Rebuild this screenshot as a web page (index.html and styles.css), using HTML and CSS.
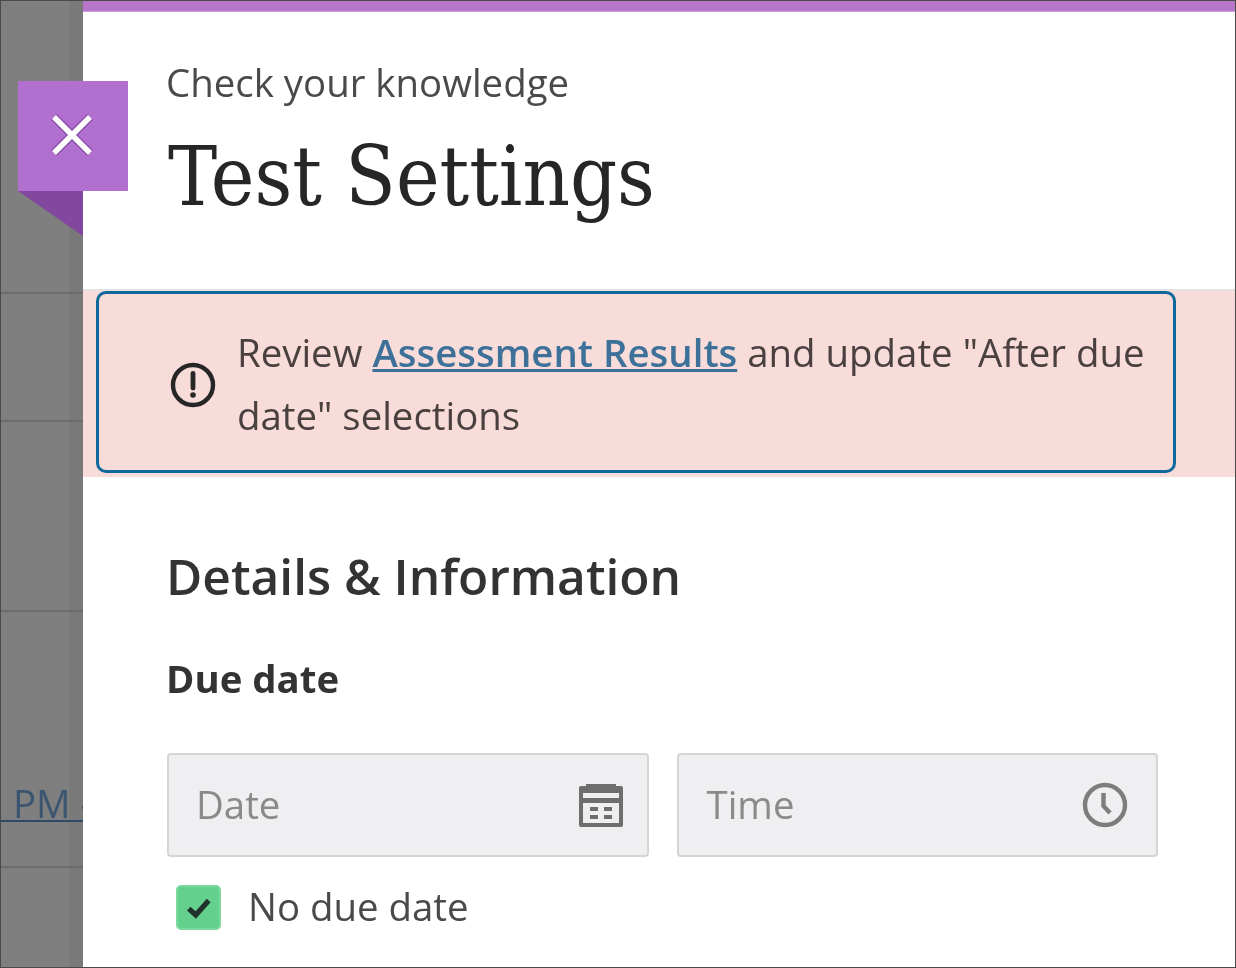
FILE: index.html
```html
<!DOCTYPE html>
<html>
<head>
    <title>Test Settings</title>
    <link rel="stylesheet" href="styles.css">
</head>
<body>
    <div class="screen">
        <div class="backdrop">
            <div class="back-row row-1"></div>
            <div class="back-row row-2"></div>
            <div class="back-row row-3"></div>
            <div class="back-row row-4"><span class="back-link">PM -</span></div>
            <div class="back-row row-5"></div>
        </div>

        <button class="close-tab" aria-label="Close">
            <svg width="42" height="42" viewBox="0 0 42 42">
                <path class="close-edge" d="M3 3L39 39M39 3L3 39"/>
                <path class="close-cross" d="M3 3L39 39M39 3L3 39"/>
            </svg>
        </button>
        <div class="close-fold"></div>

        <div class="panel">
            <div class="top-bar"></div>
            <div class="panel-head">
                <p class="course-name">Check your knowledge</p>
                <h1 class="panel-title">Test Settings</h1>
            </div>

            <div class="alert-band">
                <div class="alert-box">
                    <svg class="alert-icon" width="46" height="46" viewBox="0 0 46 46">
                        <circle cx="23" cy="23" r="20" fill="none" stroke="#262626" stroke-width="4.4"/>
                        <path d="M23 11.500V26" fill="none" stroke="#262626" stroke-width="4.800" stroke-linecap="round"/>
                        <circle cx="23" cy="33" r="2.800" fill="#262626"/>
                    </svg>
                    <p class="alert-text">Review <a href="#">Assessment Results</a> and update "After due date" selections</p>
                </div>
            </div>

            <div class="details">
                <h2 class="section-title">Details &amp; Information</h2>
                <h3 class="field-label">Due date</h3>
                <div class="field-row">
                    <div class="field field-date">
                        <span class="placeholder">Date</span>
                        <svg width="46" height="46" viewBox="0 0 46 46">
                            <path fill="#6e6e6e" fill-rule="evenodd" d="M1 6a2 2 0 0 1 2-2h5V2h30v2h5a2 2 0 0 1 2 2v37a2 2 0 0 1-2 2H3a2 2 0 0 1-2-2zM5 11v5h36v-5zM5 21v20h36V21z"/>
                            <path fill="#6e6e6e" d="M12 25h8v4h-8zM26 25h8v4h-8zM12 33h8v4h-8zM26 33h8v4h-8z"/>
                        </svg>
                    </div>
                    <div class="field field-time">
                        <span class="placeholder">Time</span>
                        <svg width="46" height="46" viewBox="0 0 46 46">
                            <circle cx="23" cy="23" r="20" fill="none" stroke="#7d7d7d" stroke-width="4.400"/>
                            <path d="M21.500 11V24L28 31" fill="none" stroke="#7d7d7d" stroke-width="4.400"/>
                        </svg>
                    </div>
                </div>
                <div class="check-row">
                    <span class="check-box">
                        <svg width="28" height="24" viewBox="0 0 26 22">
                            <path d="M3.500 11.500L10 17.500L22 4" fill="none" stroke="#20302a" stroke-width="4.800"/>
                        </svg>
                    </span>
                    <span class="check-label">No due date</span>
                </div>
            </div>
        </div>
    </div>
</body>
</html>
```

FILE: styles.css
```css
html, body {
    margin: 0;
    padding: 0;
}
body {
    font-family: "Open Sans", "Noto Sans", sans-serif;
    color: #333;
    background: #fff;
}
/* The source capture is soft, so the whole page gets a slight blur */
.screen {
    width: 1236px;
    height: 968px;
    box-sizing: border-box;
    border: 1px solid #4a4a4a;
    display: flex;
    position: relative;
    overflow: hidden;
    filter: blur(0.5px);
}

/* Dimmed page behind the panel */
.backdrop {
    width: 82px;
    flex-shrink: 0;
    background: linear-gradient(to right, #7f7f7f 68px, #797979 68px);
    display: flex;
    flex-direction: column;
}
.back-row {
    box-sizing: border-box;
    border-bottom: 2px solid #6c6c6c;
}
.row-1 { height: 293px; }
.row-2 { height: 128px; }
.row-3 { height: 190px; }
.row-4 { height: 256px; padding-top: 172px; }
.row-5 { flex: 1; border-bottom: 0; }
.back-link {
    display: block;
    font-size: 38.400px;
    line-height: 38px;
    color: #3b5570;
    padding-left: 12px;
    border-bottom: 2px solid #2f4a66;
    height: 36px;
    white-space: nowrap;
    overflow: hidden;
}

/* Close tab hangs off the panel */
.close-tab {
    position: absolute;
    left: 17px;
    top: 80px;
    width: 110px;
    height: 110px;
    padding: 0 2px 2px 0;
    border: 0;
    background: #b16fd0;
    display: flex;
    align-items: center;
    justify-content: center;
    z-index: 2;
}
.close-edge {
    fill: none;
    stroke: #8d4fae;
    stroke-width: 8.500;
}
.close-cross {
    fill: none;
    stroke: #fff;
    stroke-width: 5.500;
}
.close-fold {
    position: absolute;
    left: 17px;
    top: 190px;
    width: 65px;
    height: 45px;
    background: #82479f;
    clip-path: polygon(0 0, 100% 0, 100% 100%);
    z-index: 2;
}

.panel {
    flex: 1;
    min-width: 0;
    background: #fff;
}
.top-bar {
    height: 10px;
    background: #b776c9;
    border-bottom: 1px solid #cf9fdc;
}
.panel-head {
    height: 279px;
    box-sizing: border-box;
    padding: 45px 0 0 83px;
    border-bottom: 2px solid #e3e3e3;
}
.course-name {
    margin: 0;
    font-size: 38.400px;
    line-height: 50px;
    color: #4a4a4a;
}
.panel-title {
    margin: 25px 0 0 2px;
    font-family: "DejaVu Serif Condensed", "DejaVu Serif", serif;
    font-stretch: condensed;
    font-size: 82px;
    line-height: 90px;
    font-weight: 400;
    color: #262626;
}

.alert-band {
    height: 186px;
    box-sizing: border-box;
    background: #f7dcd9;
    padding: 0 59px 0 13px;
}
.alert-box {
    height: 182px;
    box-sizing: border-box;
    border: 3px solid #10699c;
    border-radius: 10px;
    padding: 0 20px 0 71px;
    display: flex;
    align-items: center;
    gap: 21px;
}
.alert-icon {
    flex-shrink: 0;
    margin-top: 5px;
}
.alert-text {
    margin: 4px 0 0;
    font-size: 38.400px;
    line-height: 63px;
    color: #4a4040;
}
.alert-text a {
    color: #3e7199;
    font-weight: 600;
}

.details {
    padding: 64px 77px 0 83px;
}
.section-title {
    margin: 0;
    font-size: 49.600px;
    line-height: 70px;
    font-weight: 600;
    color: #333;
}
.field-label {
    margin: 42px 0 0;
    font-size: 38.400px;
    line-height: 50px;
    font-weight: 700;
    color: #333;
}
.field-row {
    display: grid;
    grid-template-columns: 1fr 1fr;
    gap: 28px;
    margin: 50px 0 0 1px;
}
.field {
    height: 104px;
    box-sizing: border-box;
    background: #efeff1;
    border: 2px solid #d5d5d5;
    border-radius: 4px;
    display: flex;
    align-items: center;
    justify-content: space-between;
}
.field-date { padding: 0 23px 0 27px; }
.field-time { padding: 0 28px 0 28px; }
.placeholder {
    font-size: 38.400px;
    color: #8a8a8a;
    margin-bottom: 2px;
}
.check-row {
    display: flex;
    align-items: center;
    gap: 27px;
    margin-top: 28px;
    padding-left: 10px;
}
.check-box {
    width: 45px;
    height: 45px;
    box-sizing: border-box;
    background: #63d08d;
    border: 2px solid #7bd9a0;
    border-radius: 5px;
    display: flex;
    align-items: center;
    justify-content: center;
}
.check-label {
    font-size: 38.400px;
    line-height: 42px;
    color: #4a4a4a;
    margin-bottom: 3px;
}
```
